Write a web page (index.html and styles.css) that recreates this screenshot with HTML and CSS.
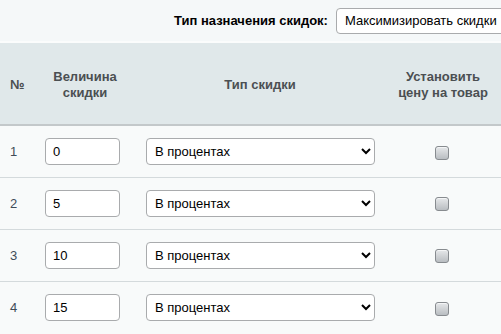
FILE: index.html
```html
<!DOCTYPE html>
<html lang="ru">
<head>
  <meta charset="UTF-8" />
  <title>Скидки</title>
  <link rel="stylesheet" href="styles.css">
</head>
<body>
  <div class="top-bar">
    <label class="top-label" for="mode">Тип назначения скидок:</label>
    <select id="mode" class="mode-select">
      <option>Максимизировать скидки</option>
    </select>
  </div>

  <table class="discounts">
    <thead>
      <tr>
        <th class="col-num">№</th>
        <th class="col-value">Величина<br>скидки</th>
        <th class="col-type">Тип скидки</th>
        <th class="col-price">Установить<br>цену на товар</th>
      </tr>
    </thead>
    <tbody>
      <tr>
        <td class="col-num">1</td>
        <td class="col-value"><input type="text" class="value-input" value="0" /></td>
        <td class="col-type"><select class="type-select"><option>В процентах</option></select></td>
        <td class="col-price"><input type="checkbox" class="price-check" /></td>
      </tr>
      <tr>
        <td class="col-num">2</td>
        <td class="col-value"><input type="text" class="value-input" value="5" /></td>
        <td class="col-type"><select class="type-select"><option>В процентах</option></select></td>
        <td class="col-price"><input type="checkbox" class="price-check" /></td>
      </tr>
      <tr>
        <td class="col-num">3</td>
        <td class="col-value"><input type="text" class="value-input" value="10" /></td>
        <td class="col-type"><select class="type-select"><option>В процентах</option></select></td>
        <td class="col-price"><input type="checkbox" class="price-check" /></td>
      </tr>
      <tr>
        <td class="col-num">4</td>
        <td class="col-value"><input type="text" class="value-input" value="15" /></td>
        <td class="col-type"><select class="type-select"><option>В процентах</option></select></td>
        <td class="col-price"><input type="checkbox" class="price-check" /></td>
      </tr>
    </tbody>
  </table>
</body>
</html>
```

FILE: styles.css
```css
body {
  margin: 0;
  font-family: "Liberation Sans", Arial, sans-serif;
  font-size: 13px;
  background: #f8fafa;
  overflow: hidden;
  width: 501px;
}
.top-bar {
  display: flex;
  align-items: center;
  gap: 8px;
  height: 41px;
  padding-left: 174px;
  background: #f5f8f9;
  border-bottom: 2px solid #fbfcfc;
  white-space: nowrap;
  overflow: hidden;
}
.top-label {
  font-weight: bold;
  color: #000;
}
.mode-select {
  flex-shrink: 0;
  width: 210px;
  height: 26px;
  padding: 0 4px;
  font-family: inherit;
  font-size: 13px;
  color: #000;
  background: #fff;
  border: 1px solid #a9abad;
  border-radius: 4px;
}
.discounts {
  width: 501px;
  border-collapse: collapse;
  table-layout: fixed;
}
.discounts th {
  box-sizing: border-box;
  height: 82px;
  padding: 3px 0 0;
  background: #e0e8ea;
  border-bottom: 2px solid #c3c8ca;
  color: #4b4f52;
  font-weight: bold;
  line-height: 16px;
  text-align: center;
}
.discounts td {
  box-sizing: border-box;
  height: 52px;
  padding: 1px 0 0;
  border-bottom: 1px solid #d4dadc;
  color: #3f4b58;
}
.discounts tr:last-child td {
  border-bottom: none;
}
.discounts .col-num {
  width: 35px;
  padding-left: 10px;
  text-align: left;
}
.discounts .col-value {
  width: 100px;
}
.discounts td.col-value {
  padding-left: 10px;
}
.discounts .col-type {
  width: 250px;
}
.discounts td.col-type {
  padding-left: 11px;
}
.discounts .col-price {
  text-align: center;
}
.discounts td.col-price {
  padding-right: 2px;
}
.value-input {
  box-sizing: border-box;
  width: 75px;
  height: 27px;
  padding: 0 7px;
  font-family: inherit;
  font-size: 13px;
  color: #000;
  background: #fff;
  border: 1px solid #a9abad;
  border-radius: 4px;
  display: block;
}
.type-select {
  box-sizing: border-box;
  width: 229px;
  height: 27px;
  padding: 0 4px;
  font-family: inherit;
  font-size: 13px;
  color: #000;
  background: #fff;
  border: 1px solid #a9abad;
  border-radius: 4px;
  display: block;
}
.price-check {
  appearance: none;
  width: 14px;
  height: 14px;
  margin: 0;
  vertical-align: middle;
  border: 1px solid #878b8f;
  border-radius: 3px;
  background: linear-gradient(#e6e8ea, #b9bdc1);
  box-shadow: inset 0 1px 0 #f4f5f6;
}
```
